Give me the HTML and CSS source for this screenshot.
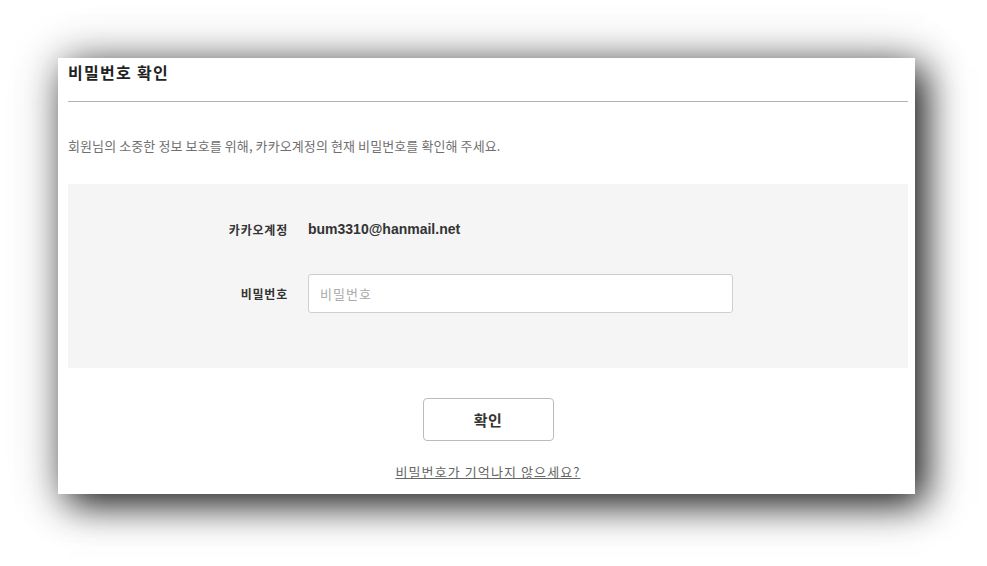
FILE: index.html
```html
<!DOCTYPE html>
<html>
<head>
    <meta charset="utf-8">
    <title>비밀번호 확인</title>
    <link rel="stylesheet" href="styles.css">
</head>
<body>
    <div class="dialog">
        <h2 class="dialog-title">비밀번호 확인</h2>
        <p class="desc">회원님의 소중한 정보 보호를 위해, 카카오계정의 현재 비밀번호를 확인해 주세요.</p>
        <div class="form-box">
            <div class="form-row">
                <span class="form-label">카카오계정</span>
                <span class="account">bum3310@hanmail.net</span>
            </div>
            <div class="form-row">
                <label class="form-label" for="pw">비밀번호</label>
                <input class="pw-input" id="pw" type="password" placeholder="비밀번호">
            </div>
        </div>
        <div class="actions">
            <button class="confirm-btn">확인</button>
            <a class="forgot-link" href="#">비밀번호가 기억나지 않으세요?</a>
        </div>
    </div>
</body>
</html>
```

FILE: styles.css
```css
body {
    margin: 0;
    height: 100vh;
    box-sizing: border-box;
    padding: 58px 0 0 58px;
    background-color: #fff;
    font-family: "Noto Sans CJK KR", "Noto Sans", sans-serif;
    color: #333;
}
.dialog {
    width: 857px;
    height: 436px;
    box-sizing: border-box;
    padding: 0 7px 0 10px;
    background-color: #fff;
    box-shadow: 10px 10px 36px rgba(0, 0, 0, 0.88), 0 0 50px rgba(0, 0, 0, 0.2);
}
.dialog-title {
    margin: 0;
    height: 44px;
    padding-top: 2px;
    box-sizing: border-box;
    font-size: 16px;
    line-height: 24px;
    font-weight: bold;
    letter-spacing: 1.3px;
    color: #222;
    border-bottom: 1px solid #b3b3b3;
}
.desc {
    margin: 34px 0 28px;
    font-size: 13px;
    line-height: 20px;
    letter-spacing: 0.1px;
    color: #707070;
}
.form-box {
    background-color: #f5f5f5;
    padding: 25px 0 55px;
}
.form-row {
    display: flex;
    align-items: center;
    height: 40px;
}
.form-row + .form-row {
    margin-top: 25px;
    height: 39px;
}
.form-label {
    width: 240px;
    padding-right: 20px;
    box-sizing: border-box;
    text-align: right;
    font-size: 12px;
    font-weight: bold;
    letter-spacing: 0.8px;
    color: #333;
}
.account {
    font-family: "Liberation Sans", Arial, sans-serif;
    font-size: 14px;
    font-weight: bold;
    color: #333;
}
.pw-input {
    width: 425px;
    height: 39px;
    box-sizing: border-box;
    margin: 0;
    padding: 0 11px;
    border: 1px solid #cfcfcf;
    border-radius: 3px;
    background-color: #fff;
    font-family: "Noto Sans CJK KR", sans-serif;
    font-size: 13px;
    letter-spacing: 1px;
    outline: none;
}
.pw-input::placeholder {
    color: #aaa;
}
.actions {
    display: flex;
    flex-direction: column;
    align-items: center;
    padding-top: 30px;
}
.confirm-btn {
    width: 131px;
    height: 43px;
    border: 1px solid #bbb;
    border-radius: 4px;
    background-color: #fff;
    font-family: "Noto Sans CJK KR", sans-serif;
    font-size: 15px;
    font-weight: bold;
    letter-spacing: 0.5px;
    color: #333;
    cursor: pointer;
}
.forgot-link {
    margin-top: 21px;
    font-size: 13px;
    line-height: 20px;
    letter-spacing: 1.1px;
    color: #666;
    text-decoration: underline;
}
```
